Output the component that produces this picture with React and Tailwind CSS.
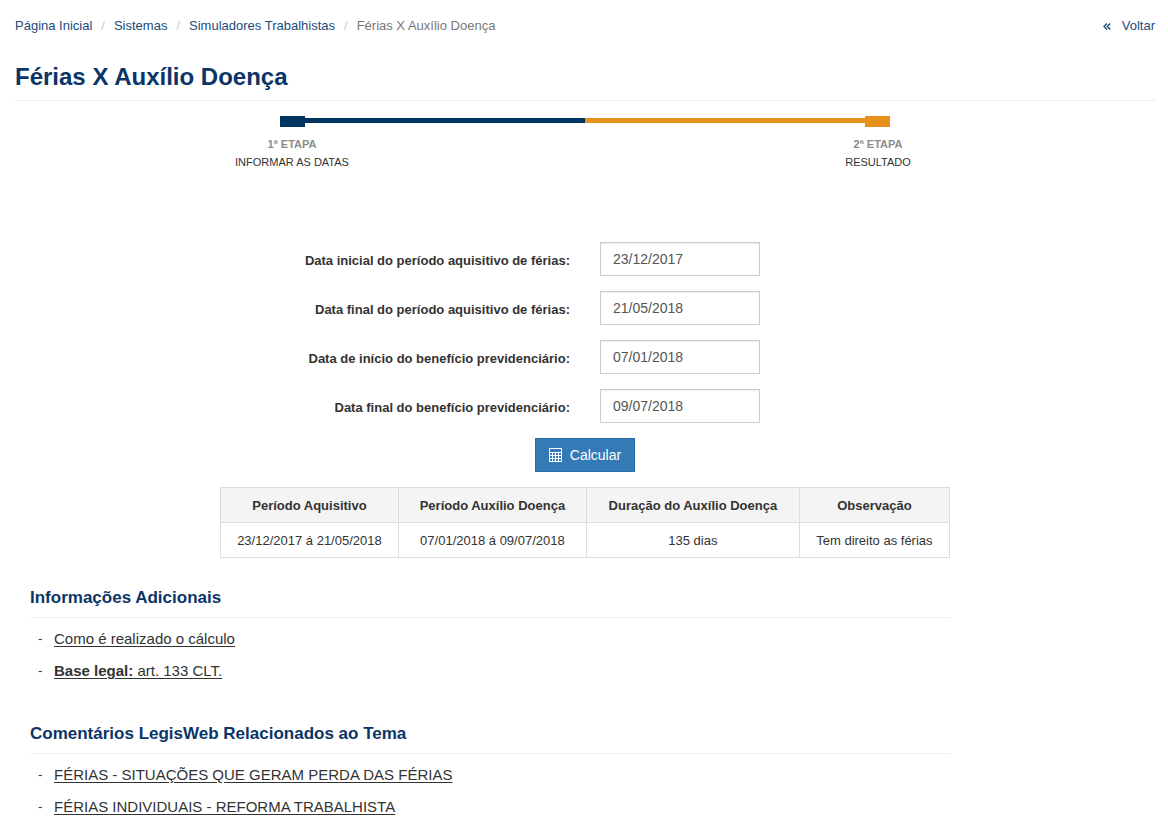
import React, { useState } from 'react';

const breadcrumb = ["Página Inicial", "Sistemas", "Simuladores Trabalhistas"];

const fields = [
  { name: "inicioAquisitivo", label: "Data inicial do período aquisitivo de férias:" },
  { name: "fimAquisitivo", label: "Data final do período aquisitivo de férias:" },
  { name: "inicioBeneficio", label: "Data de início do benefício previdenciário:" },
  { name: "fimBeneficio", label: "Data final do benefício previdenciário:" },
];

function CalculatorIcon() {
  return (
    <svg className="h-[14px] w-[13px]" viewBox="0 0 13 14" fill="currentColor" shapeRendering="crispEdges" aria-hidden="true">
      <path
        fillRule="evenodd"
        d="M0 0h13v14H0zM1 1v3h11V1zM1 5v2h2V5zM4 5v2h2V5zM7 5v2h2V5zM10 5v2h2V5zM1 8v2h2V8zM4 8v2h2V8zM7 8v2h2V8zM10 8v2h2V8zM1 11v2h2v-2zM4 11v2h2v-2zM7 11v2h2v-2zM10 11v2h2v-2z"
      />
    </svg>
  );
}

function Step({ title, text }) {
  return (
    <li className="w-[144px] text-center text-[11px] leading-[18px]">
      <p className="font-bold text-[#8c8c8c]">{title}</p>
      <p className="text-[#333]">{text}</p>
    </li>
  );
}

function LinkSection({ title, children }) {
  return (
    <section className="mb-[37px]">
      <h2 className="border-b border-[#eee] pb-[9px] text-[17px] leading-5 font-bold text-[#0b3568]">
        {title}
      </h2>
      <ul className="mt-[5px]">{children}</ul>
    </section>
  );
}

function LinkItem({ children }) {
  return (
    <li className="flex h-8 items-center pl-2 text-[15px] text-[#333]">
      <span className="w-4 text-[13px]">-</span>
      <a href="#" className="underline underline-offset-2 hover:text-[#003460]">{children}</a>
    </li>
  );
}

export default function App() {
  const [form, setForm] = useState({
    inicioAquisitivo: "23/12/2017",
    fimAquisitivo: "21/05/2018",
    inicioBeneficio: "07/01/2018",
    fimBeneficio: "09/07/2018",
  });

  const handleChange = (e) => {
    setForm({ ...form, [e.target.name]: e.target.value });
  };

  const handleSubmit = (e) => {
    e.preventDefault();
  };

  return (
    <div className="bg-white pt-4 pr-[13px] pl-[15px] font-['Liberation_Sans',Arial,sans-serif] text-[13px] text-[#333]">
      <nav className="flex justify-between leading-5 text-[#1d4b7b]">
        <ol className="flex">
          {breadcrumb.map((item) => (
            <li key={item}>
              <a href="#" className="hover:underline">{item}</a>
              <span className="px-[9px] text-[#ccc]">/</span>
            </li>
          ))}
          <li className="text-[#777]">Férias X Auxílio Doença</li>
        </ol>
        <a href="#" className="flex items-center gap-[11px] hover:underline">
          <svg className="h-[7px] w-2" viewBox="0 0 8 7" fill="none" stroke="currentColor" strokeWidth="1.4" aria-hidden="true">
            <path d="M4 .5 1 3.5l3 3M7.300 .5l-3 3 3 3" />
          </svg>
          Voltar
        </a>
      </nav>

      <h1 className="mt-7 border-b border-[#eee] pb-[10px] text-[24px] leading-[26px] font-bold text-[#0b3568]">
        Férias X Auxílio Doença
      </h1>

      <div className="mx-auto mt-[15px] flex w-full max-w-[610px] items-start">
        <div className="h-[11px] w-[25px] bg-[#003460]" />
        <div className="mt-[2px] h-[5px] flex-1 bg-[#003460]" />
        <div className="mt-[2px] h-[5px] flex-1 bg-[#e8911a]" />
        <div className="h-[11px] w-[25px] bg-[#e8911a]" />
      </div>
      <ol className="mx-auto mt-2 flex w-full max-w-[730px] justify-between">
        <Step title="1ª ETAPA" text="INFORMAR AS DATAS" />
        <Step title="2ª ETAPA" text="RESULTADO" />
      </ol>

      <form className="mx-auto mt-[71px] flex w-full max-w-[730px] flex-col gap-[15px]" onSubmit={handleSubmit}>
        {fields.map((field) => (
          <div key={field.name} className="flex items-center gap-[30px]">
            <label htmlFor={field.name} className="w-[350px] pt-1 text-right font-bold">
              {field.label}
            </label>
            <input
              id={field.name}
              name={field.name}
              type="text"
              value={form[field.name]}
              onChange={handleChange}
              className="h-[34px] w-40 border border-[#ccc] px-3 text-[14px] text-[#555] shadow-[inset_0_1px_1px_rgba(0,0,0,0.075)] outline-none focus:border-[#66afe9]"
            />
          </div>
        ))}
        <button
          type="submit"
          className="flex h-[34px] w-[100px] cursor-pointer items-center justify-center gap-2 self-center border border-[#2e6da4] bg-[#337ab7] text-[14px] text-white hover:bg-[#286090]"
        >
          <CalculatorIcon />
          Calcular
        </button>
      </form>

      <table className="mx-auto mt-[15px] w-full max-w-[730px] table-fixed border-collapse text-center">
        <colgroup>
          <col className="w-[24.4%]" />
          <col className="w-[25.8%]" />
          <col className="w-[29.2%]" />
          <col className="w-[20.6%]" />
        </colgroup>
        <thead>
          <tr className="h-[35px] bg-[#f4f4f4]">
            <th className="border border-[#ddd] pt-[2px]">Período Aquisitivo</th>
            <th className="border border-[#ddd] pt-[2px]">Período Auxílio Doença</th>
            <th className="border border-[#ddd] pt-[2px]">Duração do Auxílio Doença</th>
            <th className="border border-[#ddd] pt-[2px]">Observação</th>
          </tr>
        </thead>
        <tbody>
          <tr className="h-[35px]">
            <td className="border border-[#ddd] pt-[2px]">23/12/2017 á 21/05/2018</td>
            <td className="border border-[#ddd] pt-[2px]">07/01/2018 á 09/07/2018</td>
            <td className="border border-[#ddd] pt-[2px]">135 dias</td>
            <td className="border border-[#ddd] pt-[2px]">Tem direito as férias</td>
          </tr>
        </tbody>
      </table>

      <div className="mt-[30px] ml-[15px] max-w-[920px]">
        <LinkSection title="Informações Adicionais">
          <LinkItem>Como é realizado o cálculo</LinkItem>
          <LinkItem><strong>Base legal:</strong> art. 133 CLT.</LinkItem>
        </LinkSection>
        <LinkSection title="Comentários LegisWeb Relacionados ao Tema">
          <LinkItem>FÉRIAS - SITUAÇÕES QUE GERAM PERDA DAS FÉRIAS</LinkItem>
          <LinkItem>FÉRIAS INDIVIDUAIS - REFORMA TRABALHISTA</LinkItem>
        </LinkSection>
      </div>
    </div>
  );
}
